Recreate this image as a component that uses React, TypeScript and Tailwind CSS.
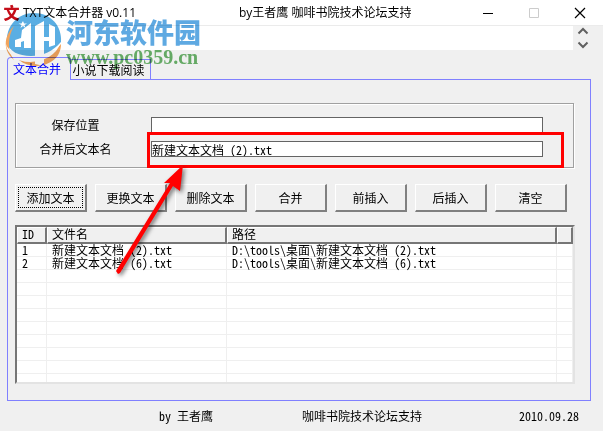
import { ReactNode } from "react";

const files = [
  { id: 1, name: "新建文本文档 (2).txt", path: "D:\\tools\\桌面\\新建文本文档 (2).txt" },
  { id: 2, name: "新建文本文档 (6).txt", path: "D:\\tools\\桌面\\新建文本文档 (6).txt" },
];

const rows = [...files, ...Array(9).fill(null)];

const actions = ["添加文本", "更换文本", "删除文本", "合并", "前插入", "后插入", "清空"];

function Logo() {
  return (
    <svg className="absolute top-2 left-0 h-[60px] w-16" viewBox="0 8 64 60">
      <path d="M7 44C5 26 18 13 34 13c17 0 28 13 27 29-8 9-18 14-30 14C18 56 10 51 7 44z" fill="#5aaee3" />
      <path d="M14 26C4 36 2 50 14 60c-4-6-5-11-5-16 0-7 2-13 5-18z" fill="#f2a45c" />
      <path d="M61 44c0 13-10 21-24 22-7 0-13-2-18-6 17 2 32-4 42-16z" fill="#f2a45c" />
      <path d="M6 44c3 9 13 13 26 13 13-1 23-6 29-15-5 14-17 19-31 20C16 62 7 54 6 44z" fill="#fff" />
      <path d="M15 47v-7l6-2 1-8 9-7v25H24v-7l-3 1v5zM35 26l9-5v16h5V24l6 3v18l-6 2v-6h-5v25l-9-2z" fill="#fff" />
      <path d="M23 21l1 2.500h3l-2.500 1.500 1 3-2.500-2-2.500 2 1-3L18.500 23.500h3z" fill="#fff" />
    </svg>
  );
}

function TitleBar() {
  return (
    <header className="flex h-[26px] items-center border-b border-[#ebebeb] bg-white font-['Open_Sans','Noto_Sans_CJK_SC',sans-serif] text-xs">
      <span className="w-[23px] text-center text-base font-black text-[#c40d18]">文</span>
      <h1 className="w-[216px]">TXT文本合并器 v0.11</h1>
      <span className="grow whitespace-nowrap">by王者鹰 咖啡书院技术论坛支持</span>
      <div className="flex">
        <button aria-label="最小化" className="flex w-[46px] justify-center">
          <svg className="size-3" viewBox="0 0 12 12"><path d="M1 6.5h10" stroke="#000" /></svg>
        </button>
        <button aria-label="最大化" className="flex w-[46px] justify-center">
          <svg className="size-3" viewBox="0 0 12 12"><path d="M1.5 1.5h9v9h-9z" fill="none" stroke="#ccc" /></svg>
        </button>
        <button aria-label="关闭" className="flex w-[46px] justify-center">
          <svg className="size-3" viewBox="0 0 12 12"><path d="M1 1l10 10M11 1L1 11" stroke="#000" strokeWidth="1.200" /></svg>
        </button>
      </div>
    </header>
  );
}

function Field({ id, label, value }: { id: string; label: string; value?: string }) {
  return (
    <div className="flex h-4 items-center">
      <label htmlFor={id} className="mr-4 w-[119px] text-center">{label}</label>
      <input id={id} defaultValue={value} className="h-4 min-w-0 grow rounded-none border border-[#646464] bg-white p-0 leading-3 outline-none" />
    </div>
  );
}

function HeadCell({ children, className }: { children?: ReactNode; className?: string }) {
  return (
    <th className={`h-[17px] border-t border-r-2 border-b-2 border-l border-t-white border-r-[#767676] border-b-[#767676] border-l-white bg-[#f0f0f0] p-0 pl-1 text-left align-top font-normal ${className ?? ""}`}>
      {children}
    </th>
  );
}

function FileTable() {
  return (
    <div className="mt-[13px] mr-2 h-[159px] overflow-hidden border-2 border-t-[#767676] border-r-[#e3e3e3] border-b-[#e3e3e3] border-l-[#767676] bg-white">
      <table className="w-full table-fixed border-separate border-spacing-0 leading-3">
        <thead>
          <tr>
            <HeadCell className="w-[30px]">ID</HeadCell>
            <HeadCell className="w-[180px]">文件名</HeadCell>
            <HeadCell>路径</HeadCell>
            <HeadCell className="w-4" />
          </tr>
        </thead>
        <tbody>
          {rows.map((file, i) => (
            <tr key={i} className="[&>td]:h-[13px] [&>td]:border-r [&>td]:border-b [&>td]:border-[#efefef] [&>td]:p-0 [&>td]:pl-[5px]">
              <td>{file?.id}</td>
              <td>{file?.name}</td>
              <td>{file?.path}</td>
              <td></td>
            </tr>
          ))}
        </tbody>
      </table>
    </div>
  );
}

export default function App() {
  return (
    <div className="relative flex min-h-screen flex-col overflow-hidden bg-[#f0f0f0] font-['Noto_Sans_Mono_CJK_SC','Noto_Sans_CJK_SC',monospace] text-xs leading-4 text-black">
      <TitleBar />
      <div className="flex h-6">
        <div className="grow bg-white" />
        <div className="flex w-[30px] flex-col items-start justify-between px-1 py-px">
          <svg className="h-2 w-3" viewBox="0 0 12 8"><path d="M1.500 6.500L6 2l4.500 4.500" fill="none" stroke="#606060" strokeWidth="2" /></svg>
          <svg className="h-2 w-3" viewBox="0 0 12 8"><path d="M1.500 1.500L6 6l4.500-4.500" fill="none" stroke="#606060" strokeWidth="2" /></svg>
        </div>
      </div>

      <main className="mt-[7px] mr-3 ml-[7px]">
        <div className="flex items-end">
          <button className="-mb-px h-[23px] w-16 rounded-t-sm border border-b-0 border-[#8080ff] bg-[#f0f0f0] pr-1 whitespace-nowrap text-[#0000ff]">文本合并</button>
          <button className="h-5 w-20 border-t border-r border-[#8080ff] pr-1 whitespace-nowrap">小说下载阅读</button>
        </div>
        <section className="border border-[#8080ff] px-[7px] pt-[23px] pb-4">
          <div className="relative mr-[9px] flex flex-col gap-2 border border-[#a0a0a0] pt-[13px] pr-[30px] pb-[10px] shadow-[inset_1px_1px_0_#fff,1px_1px_0_#fff]">
            <Field id="path" label="保存位置" />
            <Field id="name" label="合并后文本名" value="新建文本文档 (2).txt" />
            <div className="pointer-events-none absolute top-7 right-[9px] -bottom-px left-[131px] border-3 border-[#ff0000]" />
          </div>
          <div className="mt-4 flex gap-2">
            {actions.map((label, i) => (
              <button key={label} className="h-7 w-[72px] border-t border-r-2 border-b-2 border-l border-t-white border-r-[#808080] border-b-[#808080] border-l-white p-[2px]">
                <span className={`flex h-full items-center justify-center ${i === 0 ? "border border-dotted border-black" : ""}`}>{label}</span>
              </button>
            ))}
          </div>
          <FileTable />
        </section>
      </main>

      <footer className="mt-[7px] flex justify-between pr-6 pl-[159px]">
        <span>by 王者鹰</span>
        <span className="mr-2">咖啡书院技术论坛支持</span>
        <span>2010.09.28</span>
      </footer>

      <svg className="pointer-events-none absolute top-[160px] left-[110px] h-[120px] w-[90px]" viewBox="0 0 90 120">
        <g className="drop-shadow-[2px_2px_2px_#0008]">
          <path d="M73 5L54 23 60 23 6 111 8 114 10 113 63 26 70 31z" fill="#f00" />
        </g>
      </svg>

      {/* Site watermark */}
      <div className="pointer-events-none absolute top-0 left-0 mix-blend-multiply">
        <Logo />
        <div className="absolute top-4 left-[66px] font-['Noto_Sans_CJK_SC',sans-serif] text-[27px] leading-8 font-black whitespace-nowrap text-[#5ea9e2]">河东软件园</div>
        <div className="absolute top-[45px] left-[66px] font-['Liberation_Serif',serif] text-xl leading-6 font-bold text-[#6bb46b]">www.pc0359.cn</div>
      </div>
    </div>
  );
}
